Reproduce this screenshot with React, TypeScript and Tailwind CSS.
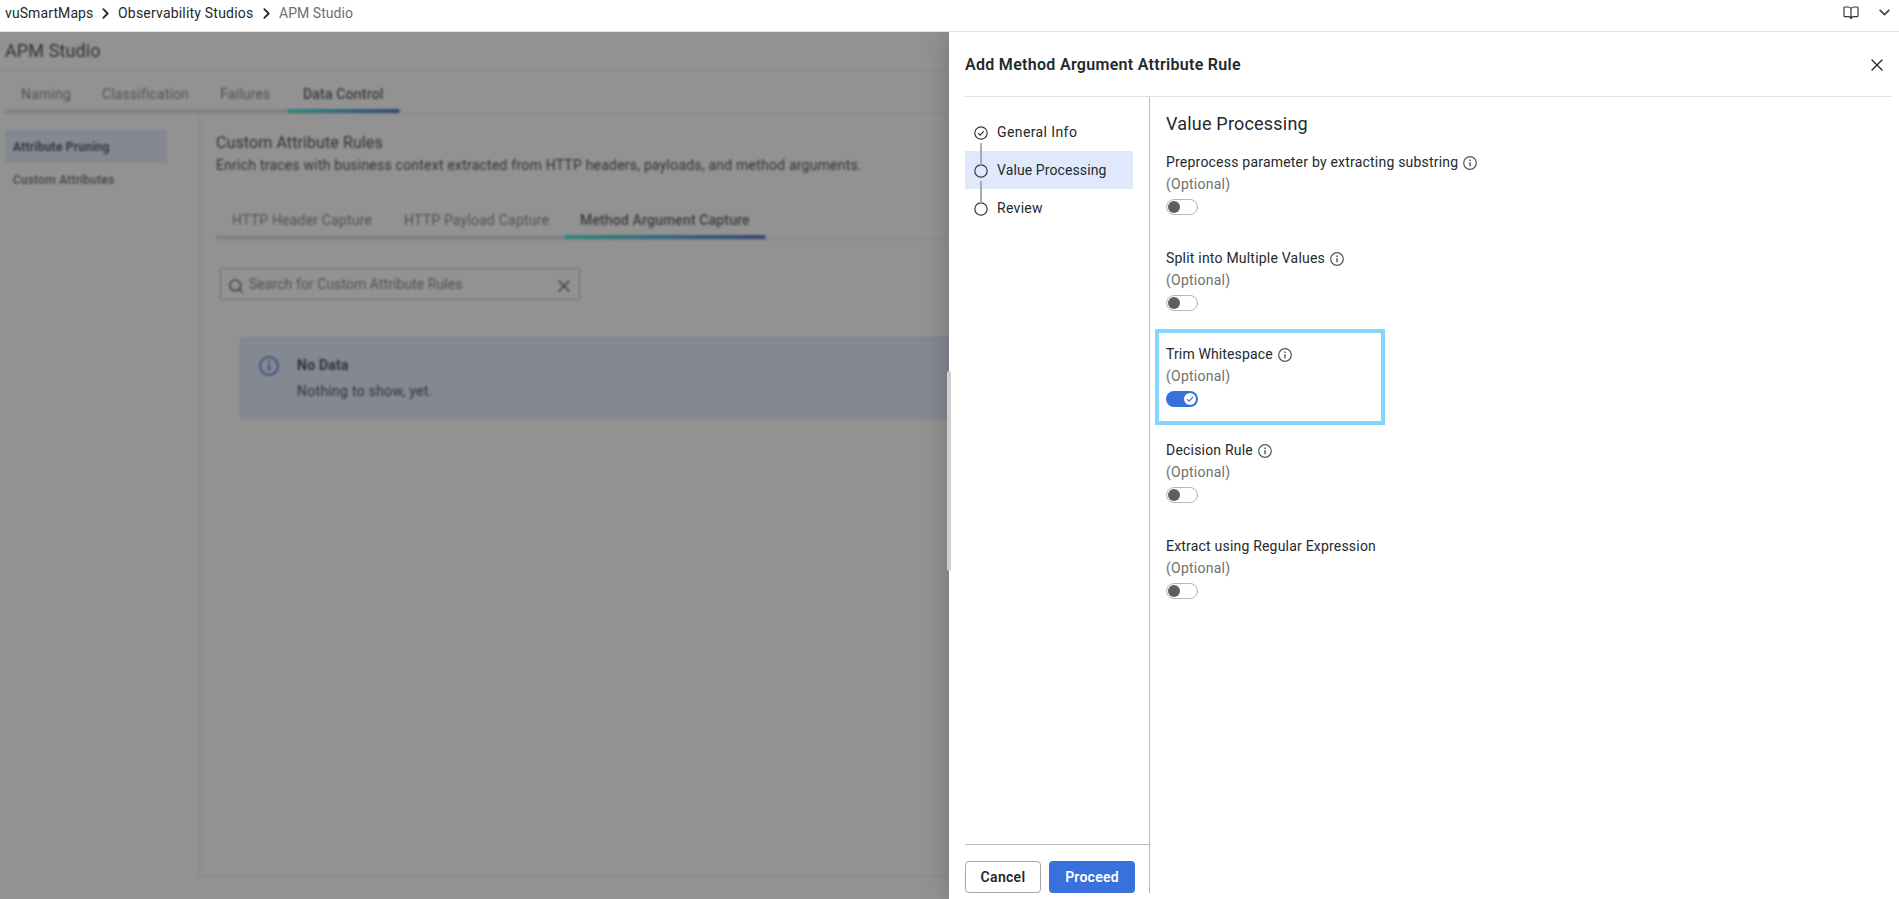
import React from "react";

function InfoIcon({ className }: { className?: string }) {
  return (
    <svg viewBox="0 0 16 16" className={className} fill="none">
      <circle cx="8" cy="8" r="7.2" stroke="currentColor" strokeWidth="1.4" />
      <path d="M8 7.2v4.4" stroke="currentColor" strokeWidth="1.700" />
      <path d="M8 4.100v1.700" stroke="currentColor" strokeWidth="1.700" />
    </svg>
  );
}

function Chevron({ className }: { className?: string }) {
  return (
    <svg viewBox="0 0 12 12" className={className} fill="none" stroke="currentColor" strokeWidth="1.7" strokeLinecap="round" strokeLinejoin="round">
      <path d="M4 2l4 4-4 4" />
    </svg>
  );
}

function Cross({ className }: { className?: string }) {
  return (
    <svg viewBox="0 0 12 12" className={className} fill="none" stroke="currentColor" strokeWidth="1.4" strokeLinecap="round">
      <path d="M1 1l10 10M11 1L1 11" />
    </svg>
  );
}

function Tab({ label, width, spacing, active }: { label: string; width: string; spacing: string; active?: boolean }) {
  return (
    <div className={`flex flex-col justify-between ${width}`}>
      <div className={`whitespace-nowrap pl-4 text-sm leading-5 ${spacing} ${active ? "font-medium text-[#3c4144]" : "text-[#6a7073]"}`}>{label}</div>
      <div className={`h-1 ${active ? "rounded-xs bg-linear-to-r from-[#20e8cc] to-[#3a55c4]" : "bg-[#dcdcdc]"}`} />
    </div>
  );
}

type Option = { label: string; spacing: string; info?: boolean; on?: boolean };

const options: Option[] = [
  { label: "Preprocess parameter by extracting substring", spacing: "tracking-[0.21px]", info: true },
  { label: "Split into Multiple Values", spacing: "tracking-[0.21px]", info: true },
  { label: "Trim Whitespace", spacing: "tracking-[0.13px]", info: true, on: true },
  { label: "Decision Rule", spacing: "tracking-[0.2px]", info: true },
  { label: "Extract using Regular Expression", spacing: "tracking-[0.2px]" },
];

function Toggle({ on }: { on?: boolean }) {
  return on ? (
    <div className="flex h-4 w-8 items-center justify-end rounded-full bg-[#3871dc] pr-0.5">
      <div className="flex size-3 items-center justify-center rounded-full bg-white">
        <svg viewBox="0 0 8 8" className="size-2" fill="none" stroke="#3871dc" strokeWidth="1.1">
          <path d="M1 4.2l2 2 4-4.2" />
        </svg>
      </div>
    </div>
  ) : (
    <div className="flex h-4 w-8 items-center rounded-full border border-[#b4b6b7] pl-px">
      <div className="size-3 rounded-full bg-[#5a6063]" />
    </div>
  );
}

function OptionRow({ option }: { option: Option }) {
  return (
    <div className="relative h-24">
      {option.on && <div className="absolute -top-[14px] -left-[11px] h-24 w-[230px] border-4 border-[#85d6ff]" />}
      <div className="flex h-[22px] items-center gap-[5px] text-sm">
        <span className={`whitespace-nowrap text-[#24292c] ${option.spacing}`}>{option.label}</span>
        {option.info && <InfoIcon className="mt-0.5 size-3.5 text-[#55595c]" />}
      </div>
      <div className="h-[22px] text-sm leading-[22px] tracking-[0.25px] text-[#6b7073]">(Optional)</div>
      <div className="pt-1">
        <Toggle on={option.on} />
      </div>
    </div>
  );
}

function Step({ label, spacing, done, active, last }: { label: string; spacing: string; done?: boolean; active?: boolean; last?: boolean }) {
  return (
    <div className={`relative flex h-[38px] items-center gap-[9px] pl-[9px] ${active ? "bg-[#e0e9fb]" : ""}`}>
      <svg viewBox="0 0 14 14" className="mt-px size-3.5" fill="none" stroke="#33383b" strokeWidth="1.2">
        <circle cx="7" cy="7" r="6.2" />
        {done && <path d="M4.2 7.2l2 1.9 3.6-4" />}
      </svg>
      <span className={`text-sm text-[#24292c] ${spacing}`}>{label}</span>
      {!last && <div className="absolute top-[30px] left-[15px] z-10 h-[22px] w-0.5 bg-[#a9abac]" />}
    </div>
  );
}

export default function App() {
  return (
    <div className="flex h-[899px] w-[1899px] flex-col overflow-hidden bg-white font-[Roboto,'Liberation_Sans',sans-serif] text-sm text-[#24292c]">
      <header className="flex h-8 shrink-0 items-start justify-between border-b border-[#dfdfdf] pr-2 pl-[5px]">
        <nav className="flex h-[25px] items-center whitespace-nowrap leading-6">
          <span className="w-[88px] tracking-[0.1px]">vuSmartMaps</span>
          <Chevron className="mx-[6px] mt-0.5 size-[13px]" />
          <span className="w-[136px] tracking-[0.2px]">Observability Studios</span>
          <Chevron className="mx-[6px] mt-0.5 size-[13px]" />
          <span className="tracking-[0.05px] text-[#6b7073]">APM Studio</span>
        </nav>
        <div className="flex h-[25px] items-center">
          <svg viewBox="0 0 16 14" className="mr-[19px] h-3.5 w-4" fill="none" stroke="#33383b" strokeWidth="1.2" strokeLinejoin="round">
            <path d="M8 2.5v9.8M8 2.5C7.2 1.2 6 1 4.8 1H1.9Q1 1 1 1.9v7.8q0 .9.9.9h3.4c1.4 0 2.2.5 2.7 2 .5-1.5 1.3-2 2.7-2h3.400q.9 0 .9-.9V1.900q0-.9-.9-.9h-2.900C10 1 8.800 1.200 8 2.500z" />
          </svg>
          <Chevron className="size-[13px] rotate-90 text-[#4a4f52]" />
        </div>
      </header>

      <div className="flex min-h-0 flex-1">
        <main className="relative w-[949px] shrink-0 overflow-hidden">
          <div className="flex h-full flex-col blur-[0.8px]">
            <h1 className="h-[39px] border-b border-[#e6e6e6] pl-[5px] text-lg leading-[38px] tracking-[0.1px]">APM Studio</h1>
            <div className="flex h-[43px] border-b border-[#e0e0e0] pt-[13px] pl-[5px]">
              <Tab label="Naming" width="w-[81px]" spacing="tracking-[0.2px]" />
              <Tab label="Classification" width="w-[118px]" spacing="tracking-[0.15px]" />
              <Tab label="Failures" width="w-[83px]" spacing="tracking-[0.2px]" />
              <Tab label="Data Control" width="w-[113px]" spacing="tracking-[0.2px]" active />
            </div>
            <div className="flex flex-1 pb-[22px]">
              <aside className="w-[199px] pt-4 pl-[5px] text-xs">
                <div className="h-[33px] w-[162px] bg-[#e0e9fb] pl-2 leading-[34px] font-semibold tracking-[0.25px]">Attribute Pruning</div>
                <div className="h-[33px] pl-2 leading-[35px] font-medium tracking-[0.2px] text-[#4a4f52]">Custom Attributes</div>
              </aside>
              <section className="flex-1 border-b border-l border-[#e0e0e0] pt-[18px] pl-4">
                <h2 className="h-[22px] text-base leading-[22px] tracking-[0.1px]">Custom Attribute Rules</h2>
                <p className="h-[22px] whitespace-nowrap leading-[22px] tracking-[0.22px]">Enrich traces with business context extracted from HTTP headers, payloads, and method arguments.</p>
                <div className="mt-[34px] flex h-[30px] border-b border-[#e0e0e0]">
                  <Tab label="HTTP Header Capture" width="w-[172px]" spacing="tracking-[0.2px]" />
                  <Tab label="HTTP Payload Capture" width="w-[176px]" spacing="tracking-[0.2px]" />
                  <Tab label="Method Argument Capture" width="w-[202px]" spacing="tracking-[0.15px]" active />
                </div>
                <div className="mt-7 ml-1 flex h-8 w-[360px] items-center rounded-xs border border-[#b0b2b3] pr-[9px] pl-2 text-[#6a7073]">
                  <svg viewBox="0 0 14 14" className="mt-1 size-3.5" fill="none" stroke="#3f4447" strokeWidth="1.5">
                    <circle cx="6.3" cy="6.3" r="5.4" />
                    <path d="M10.3 10.3l3.2 3.2" />
                  </svg>
                  <span className="ml-1.5 flex-1 tracking-[0.06px]">Search for Custom Attribute Rules</span>
                  <Cross className="mt-1 size-3 text-[#33383b]" />
                </div>
                <div className="mt-[37px] ml-6 flex h-[82px] gap-[18px] rounded-xs border border-[#c6d6f8] bg-[#e0e9fb] pt-[17px] pl-[18px]">
                  <InfoIcon className="mt-px size-5 text-[#2f68d8]" />
                  <div>
                    <div className="h-[26px] leading-5 font-bold tracking-[0.25px]">No Data</div>
                    <div className="leading-[21px] tracking-[0.28px]">Nothing to show, yet.</div>
                  </div>
                </div>
              </section>
            </div>
          </div>
          <div className="absolute inset-0 bg-[#393939]/55" />
        </main>

        <div className="relative flex flex-1 flex-col bg-white pl-4 shadow-[0_0_24px_rgba(0,0,0,0.22)] [clip-path:inset(0_0_0_-30px)]">
          <div className="absolute top-[339px] -left-0.5 h-[200px] w-1 rounded-sm bg-[#cfcfcf]" />
          <div className="mr-[7px] flex h-[65px] items-center justify-between border-b border-[#dfdfdf] pr-[9px]">
            <h2 className="mt-px text-base font-semibold tracking-[0.3px]">Add Method Argument Attribute Rule</h2>
            <Cross className="mt-0.5 size-3" />
          </div>
          <div className="mb-1.5 flex min-h-0 flex-1">
            <div className="flex w-[185px] flex-col border-r border-[#b7b9ba]">
              <div className="w-[168px] flex-1 pt-4">
                <Step label="General Info" spacing="tracking-[0.4px]" done />
                <Step label="Value Processing" spacing="tracking-[0.1px]" active />
                <Step label="Review" spacing="tracking-[0.3px]" last />
              </div>
              <div className="-mr-0.5 flex h-[49px] gap-2 border-t border-[#b7b9ba] pt-4 text-sm font-semibold">
                <button className="h-8 w-[76px] rounded border border-[#a4a6a8] tracking-[0.3px]">Cancel</button>
                <button className="h-8 w-[86px] rounded bg-[#3871dc] tracking-[0.25px] text-white">Proceed</button>
              </div>
            </div>
            <div className="flex-1 pt-3.5 pl-4">
              <h3 className="h-10 text-lg leading-[26px] tracking-[0.2px]">Value Processing</h3>
              {options.map((o) => (
                <OptionRow key={o.label} option={o} />
              ))}
            </div>
          </div>
        </div>
      </div>
    </div>
  );
}
